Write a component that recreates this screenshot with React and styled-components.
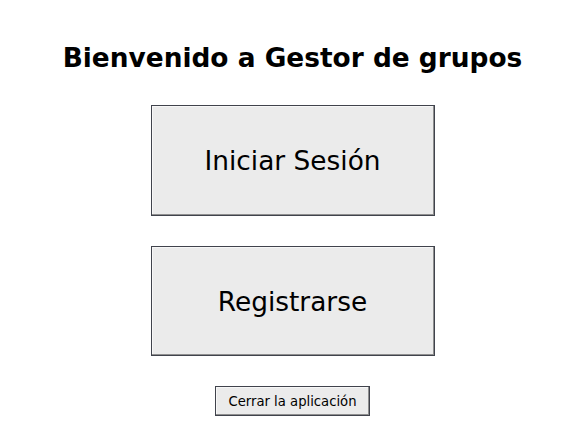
import React from "react";
import styled, { createGlobalStyle } from "styled-components";

const Global = createGlobalStyle`
  html, body { margin: 0; padding: 0; background: #ffffff; }
  body { font-family: "DejaVu Sans", "Liberation Sans", sans-serif; }
`;

const Page = styled.div`
  width: 585px;
  height: 447px;
  display: flex;
  flex-direction: column;
  align-items: center;
  padding-top: 41px;
  box-sizing: border-box;
`;

const Title = styled.h1`
  margin: 0 0 30px;
  font-family: "DejaVu Sans", sans-serif;
  font-weight: bold;
  font-size: 26.4px;
  line-height: 34px;
  color: #000;
  white-space: nowrap;
`;

const Button = styled.button`
  box-sizing: border-box;
  width: ${(p) => (p.$small ? 155 : 284)}px;
  height: ${(p) => p.$h}px;
  margin: 0 0 ${(p) => p.$gap || 0}px;
  padding: 0;
  background: #ebebeb;
  border: 1px solid #40434c;
  box-shadow: inset -1px -1px 0 #8f8f8f, inset 1px 1px 0 #f7f7f7;
  font-family: "DejaVu Sans", sans-serif;
  font-size: ${(p) => (p.$small ? 13.2 : 26.4)}px;
  color: #000;
  cursor: pointer;
  display: flex;
  align-items: center;
  justify-content: center;
  white-space: nowrap;
`;

export default function App() {
  return (
    <>
      <Global />
      <Page>
        <Title>Bienvenido a Gestor de grupos</Title>
        <Button $h={111} $gap={30}>Iniciar Sesión</Button>
        <Button $h={110} $gap={30}>Registrarse</Button>
        <Button $small $h={30}>Cerrar la aplicación</Button>
      </Page>
    </>
  );
}
